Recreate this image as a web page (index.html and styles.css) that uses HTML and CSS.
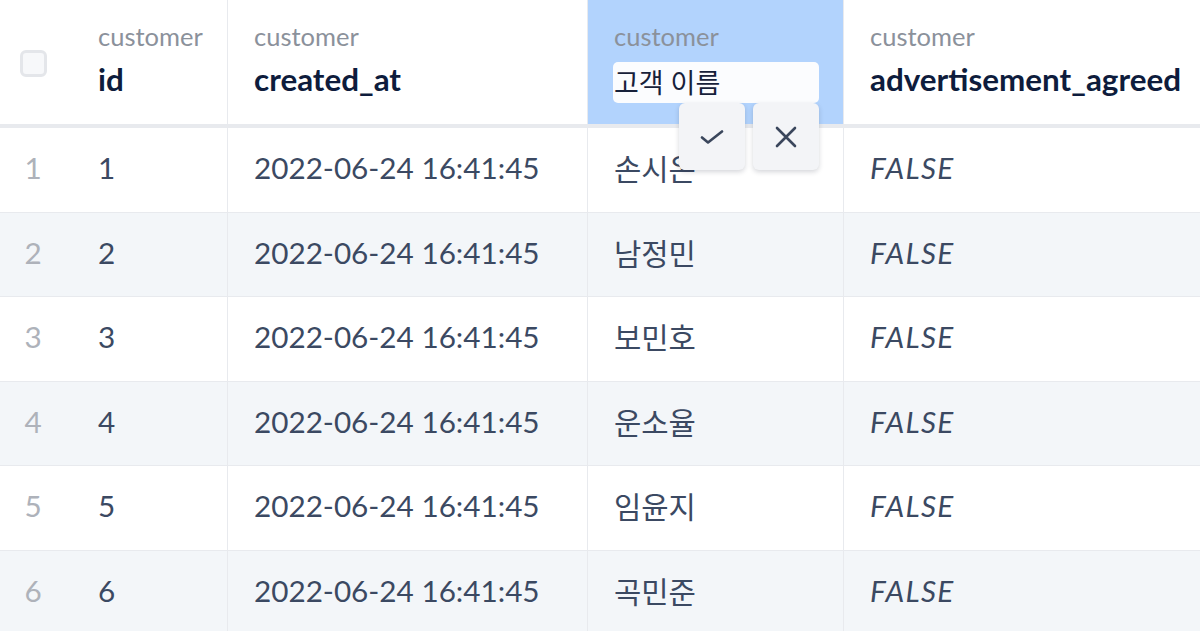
FILE: index.html
```html
<!DOCTYPE html>
<html lang="ko">
<head>
<meta charset="utf-8">
<link rel="stylesheet" href="styles.css">
</head>
<body>
<div class="table">
  <div class="row head">
    <div class="cell first">
      <span class="lead"><span class="checkbox"></span></span>
      <div class="hlabel"><span class="group">customer</span><span class="name">id</span></div>
    </div>
    <div class="cell"><div class="hlabel"><span class="group">customer</span><span class="name">created_at</span></div></div>
    <div class="cell editing">
      <div class="hlabel"><span class="group">customer</span><span class="edit-input">고객 이름</span></div>
      <div class="edit-actions">
        <button class="act"><svg width="24" height="14" viewBox="0 0 24 14"><path d="M2 7.5 L8 12.5 L22 1.5" fill="none" stroke="#3a465c" stroke-width="2.6" stroke-linecap="round" stroke-linejoin="round"/></svg></button>
        <button class="act"><svg width="22" height="22" viewBox="0 0 22 22"><path d="M2 2 L20 20 M20 2 L2 20" fill="none" stroke="#3a465c" stroke-width="2.6" stroke-linecap="round"/></svg></button>
      </div>
    </div>
    <div class="cell last"><div class="hlabel"><span class="group">customer</span><span class="name">advertisement_agreed</span></div></div>
  </div>

  <div class="row"><div class="cell first"><span class="lead num">1</span><span class="val">1</span></div><div class="cell"><span class="val">2022-06-24 16:41:45</span></div><div class="cell"><span class="val">손시온</span></div><div class="cell last"><span class="val bool">FALSE</span></div></div>
  <div class="row alt"><div class="cell first"><span class="lead num">2</span><span class="val">2</span></div><div class="cell"><span class="val">2022-06-24 16:41:45</span></div><div class="cell"><span class="val">남정민</span></div><div class="cell last"><span class="val bool">FALSE</span></div></div>
  <div class="row"><div class="cell first"><span class="lead num">3</span><span class="val">3</span></div><div class="cell"><span class="val">2022-06-24 16:41:45</span></div><div class="cell"><span class="val">보민호</span></div><div class="cell last"><span class="val bool">FALSE</span></div></div>
  <div class="row alt"><div class="cell first"><span class="lead num">4</span><span class="val">4</span></div><div class="cell"><span class="val">2022-06-24 16:41:45</span></div><div class="cell"><span class="val">운소율</span></div><div class="cell last"><span class="val bool">FALSE</span></div></div>
  <div class="row"><div class="cell first"><span class="lead num">5</span><span class="val">5</span></div><div class="cell"><span class="val">2022-06-24 16:41:45</span></div><div class="cell"><span class="val">임윤지</span></div><div class="cell last"><span class="val bool">FALSE</span></div></div>
  <div class="row alt"><div class="cell first"><span class="lead num">6</span><span class="val">6</span></div><div class="cell"><span class="val">2022-06-24 16:41:45</span></div><div class="cell"><span class="val">곡민준</span></div><div class="cell last"><span class="val bool">FALSE</span></div></div>
</div>
</body>
</html>
```

FILE: styles.css
```css
* { box-sizing: border-box; }
html, body {
  margin: 0;
  padding: 0;
  background: #ffffff;
  overflow: hidden;
}
body {
  width: 1200px;
  height: 631px;
  font-family: Lato, "Noto Sans CJK KR", sans-serif;
}
.table {
  display: flex;
  flex-direction: column;
}
.row {
  display: grid;
  grid-template-columns: 228px 360px 256px 1fr;
  height: 84.5px;
  border-bottom: 1px solid #e8eaee;
}
.row.alt { background: #f3f6f9; }
.row.head {
  height: 128px;
  border-bottom: 4px solid #e8eaee;
}
.cell {
  display: flex;
  align-items: center;
  padding-left: 26px;
  padding-bottom: 4px;
  border-right: 1px solid #e8eaee;
  position: relative;
  min-width: 0;
}
.head .cell { padding-bottom: 0; }
.cell.last { border-right: none; }
.cell.first { padding-left: 0; }
.lead {
  width: 66px;
  flex: none;
  display: flex;
  justify-content: center;
}
.first .val, .first .hlabel { margin-left: 32px; }
.checkbox {
  width: 27px;
  height: 27px;
  border: 3px solid #e4e6ea;
  border-radius: 6px;
  background: #f7f8fa;
  margin-top: 2px;
}
.hlabel {
  display: flex;
  flex-direction: column;
  align-self: flex-start;
  padding-top: 21px;
}
.group {
  font-size: 25.5px;
  line-height: 30px;
  color: #8b919b;
}
.name {
  font-size: 31.4px;
  line-height: 40px;
  margin-top: 8px;
  font-weight: 700;
  color: #0e1c3c;
}
.val {
  font-size: 29.7px;
  color: #3b4962;
}
.num {
  font-size: 29.7px;
  color: #aeb2ba;
}
.bool { font-style: italic; letter-spacing: 1.3px; }
.cell.editing { background: #b2d3fd; }
.edit-input {
  margin-top: 11px;
  width: 206px;
  height: 41px;
  margin-left: -1px;
  padding-left: 1px;
  background: #fbfcfe;
  border-radius: 5px;
  font-size: 27px;
  line-height: 41px;
  color: #17213a;
}
.edit-actions {
  position: absolute;
  left: 91px;
  top: 103px;
  display: flex;
  gap: 8px;
  z-index: 2;
}
.act {
  width: 66px;
  height: 67px;
  border: none;
  border-radius: 6px;
  background: #f3f4f7;
  box-shadow: 0 2px 5px rgba(20, 30, 50, 0.18);
  display: flex;
  align-items: center;
  justify-content: center;
  padding: 0;
}
```
